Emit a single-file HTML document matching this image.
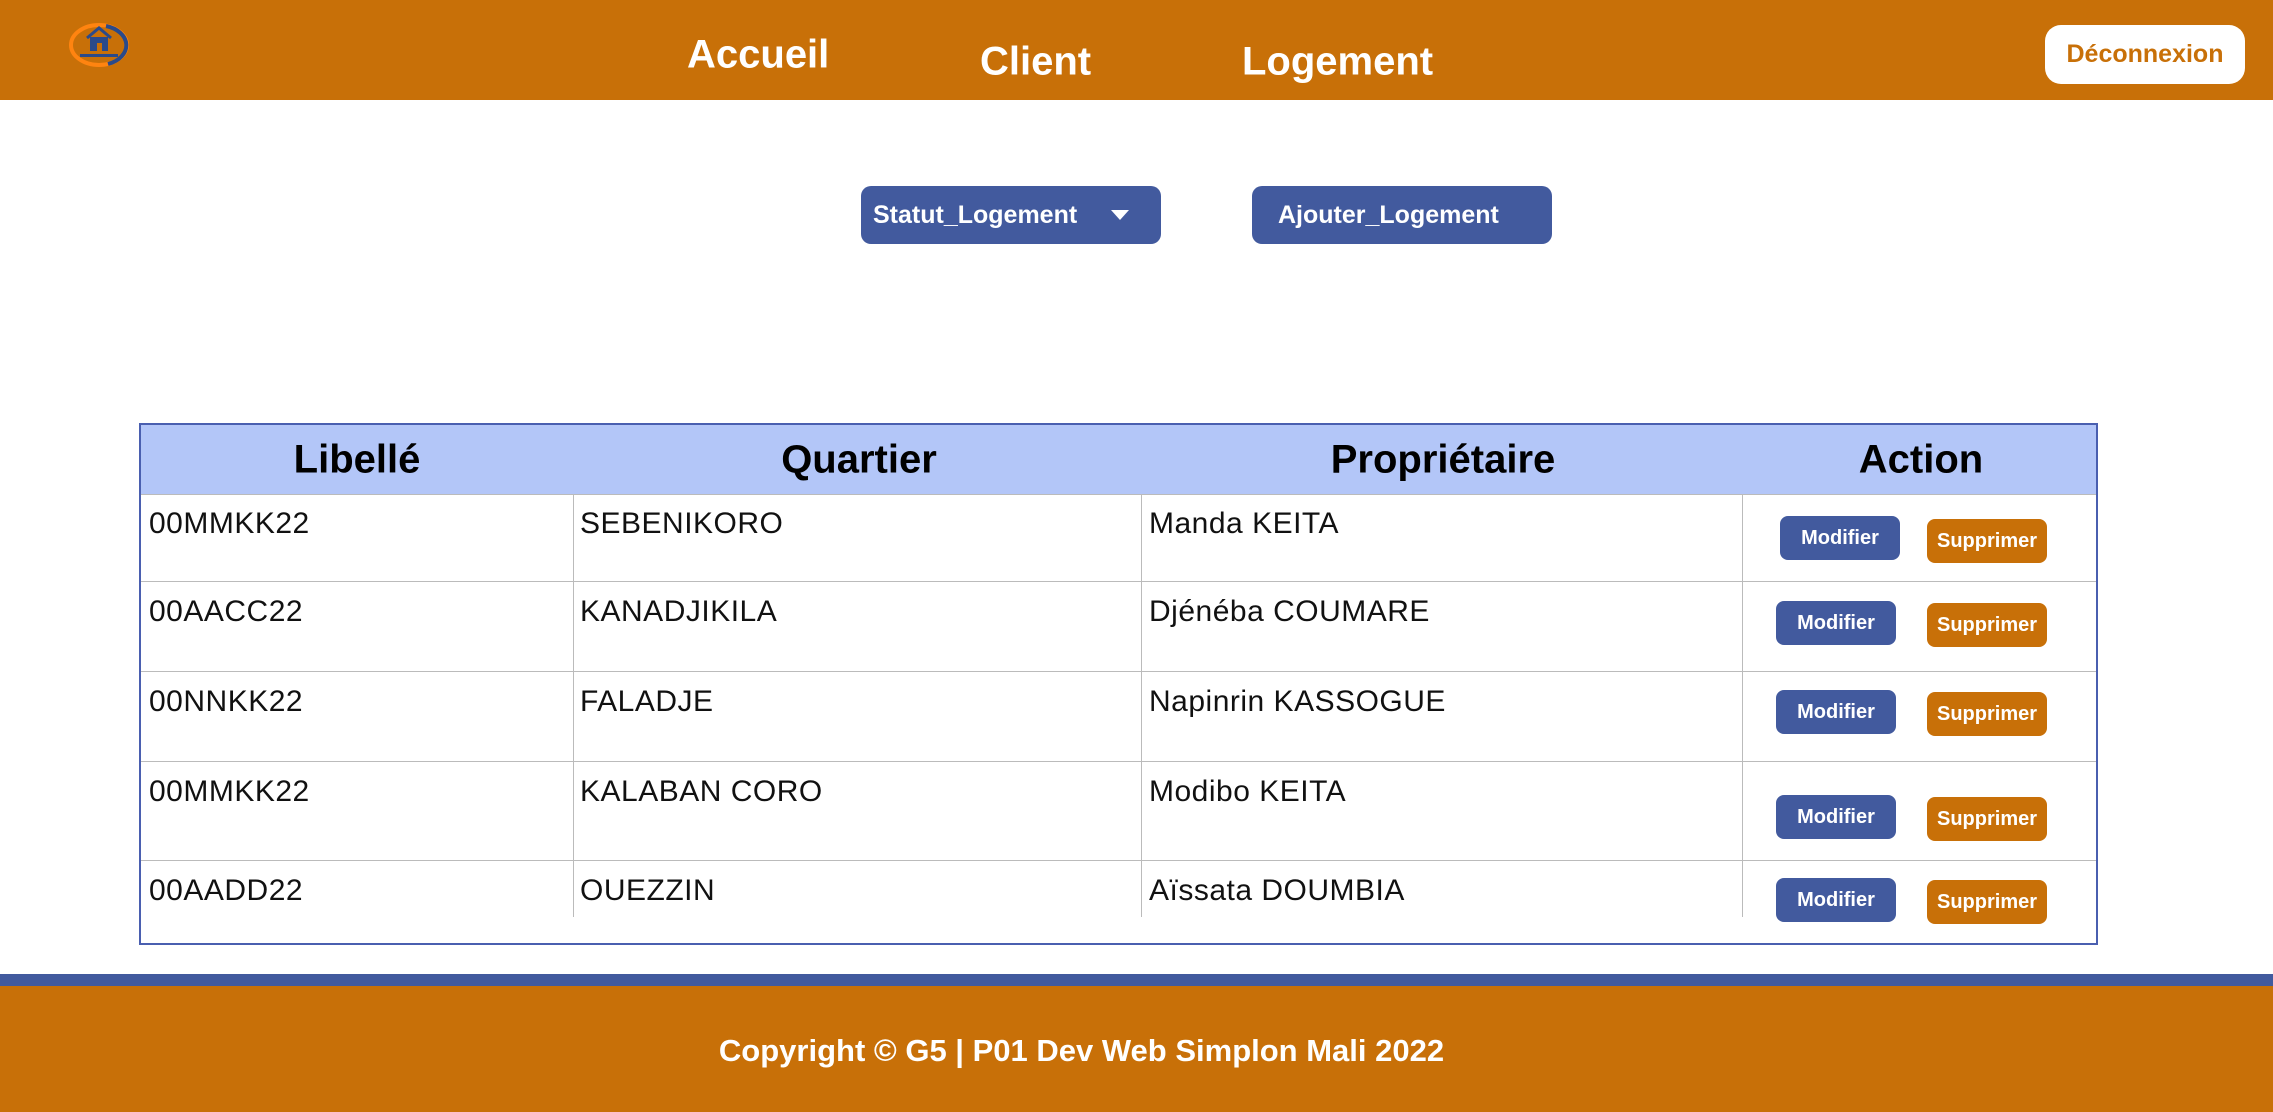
<!DOCTYPE html>
<html><head><meta charset="utf-8"><style>
*{margin:0;padding:0;box-sizing:border-box}
body{width:2273px;height:1112px;position:relative;background:#fff;font-family:"Liberation Sans",sans-serif;overflow:hidden}
.hdr{position:absolute;left:0;top:0;width:2273px;height:100px;background:#C87008}
.nav{position:absolute;color:#fff;font-weight:bold;font-size:40px;transform:translateY(-50%)}
.dec{position:absolute;left:2045px;top:25px;width:200px;height:59px;background:#fff;border-radius:16px;color:#C87008;font-weight:bold;font-size:25px;display:flex;align-items:center;justify-content:center}
.btn{position:absolute;top:186px;width:300px;height:58px;background:#425A9E;border-radius:10px;color:#fff;font-weight:bold;font-size:25px;display:flex;align-items:center}
.tbl{position:absolute;left:139px;top:423px;width:1959px;height:522px;border:2px solid #4a5fb0}
.th{position:absolute;top:0;left:0;width:100%;height:70px;background:#B3C6F8;border-bottom:1px solid #bbb}
.h{position:absolute;top:35px;transform:translate(-50%,-50%);font-weight:bold;font-size:40px;color:#000}
.vl{position:absolute;width:1px;background:#bbb}
.hl{position:absolute;left:0;width:100%;height:1px;background:#bbb}
.c{position:absolute;font-size:30px;color:#111;letter-spacing:0.5px}
.m,.s{position:absolute;width:120px;height:44px;border-radius:8px;color:#fff;font-weight:bold;font-size:20px;display:flex;align-items:center;justify-content:center}
.m{background:#425A9E}.s{background:#C87008}
</style></head><body>
<div class="hdr">
<svg style="position:absolute;left:68px;top:22px" width="62" height="46" viewBox="0 0 62 46">
<ellipse cx="31" cy="23" rx="28" ry="20" fill="none" stroke="#FF8410" stroke-width="4"/>
<path d="M38 4 A28 20 0 0 1 40 42" fill="none" stroke="#2a4a8a" stroke-width="4"/>
<path d="M19 16 L31 6 L43 16" fill="none" stroke="#2a4a8a" stroke-width="3"/>
<rect x="22" y="15" width="18" height="14" fill="#2a4a8a"/><rect x="29" y="21" width="5" height="8" fill="#C87008"/>
<rect x="12" y="32" width="38" height="3" fill="#2a4a8a"/>
</svg>
<div class="nav" style="left:687px;top:55px">Accueil</div>
<div class="nav" style="left:980px;top:62px">Client</div>
<div class="nav" style="left:1242px;top:62px">Logement</div>
<div class="dec">Déconnexion</div>
</div>
<div class="btn" style="left:861px;padding-left:12px">Statut_Logement
<svg style="position:absolute;left:250px;top:24px" width="18" height="10"><path d="M0 0H18L9 10Z" fill="#fff"/></svg></div>
<div class="btn" style="left:1252px;padding-left:26px">Ajouter_Logement</div>
<div class="tbl">
<div class="th"></div>
<div class="h" style="left:216px">Libellé</div>
<div class="h" style="left:718px">Quartier</div>
<div class="h" style="left:1302px">Propriétaire</div>
<div class="h" style="left:1780px">Action</div>
<div class="vl" style="left:432px;top:70px;height:422px"></div>
<div class="vl" style="left:1000px;top:70px;height:422px"></div>
<div class="vl" style="left:1601px;top:70px;height:422px"></div>
<div class="hl" style="top:156px"></div>
<div class="hl" style="top:246px"></div>
<div class="hl" style="top:336px"></div>
<div class="hl" style="top:435px"></div>

<div class="c" style="left:8px;top:82px">00MMKK22</div><div class="c" style="left:439px;top:82px">SEBENIKORO</div><div class="c" style="left:1008px;top:82px">Manda KEITA</div>
<div class="m" style="left:1639px;top:91px">Modifier</div><div class="s" style="left:1786px;top:94px">Supprimer</div>

<div class="c" style="left:8px;top:170px">00AACC22</div><div class="c" style="left:439px;top:170px">KANADJIKILA</div><div class="c" style="left:1008px;top:170px">Djénéba COUMARE</div>
<div class="m" style="left:1635px;top:176px">Modifier</div><div class="s" style="left:1786px;top:178px">Supprimer</div>

<div class="c" style="left:8px;top:260px">00NNKK22</div><div class="c" style="left:439px;top:260px">FALADJE</div><div class="c" style="left:1008px;top:260px">Napinrin KASSOGUE</div>
<div class="m" style="left:1635px;top:265px">Modifier</div><div class="s" style="left:1786px;top:267px">Supprimer</div>

<div class="c" style="left:8px;top:350px">00MMKK22</div><div class="c" style="left:439px;top:350px">KALABAN CORO</div><div class="c" style="left:1008px;top:350px">Modibo KEITA</div>
<div class="m" style="left:1635px;top:370px">Modifier</div><div class="s" style="left:1786px;top:372px">Supprimer</div>

<div class="c" style="left:8px;top:449px">00AADD22</div><div class="c" style="left:439px;top:449px">OUEZZIN</div><div class="c" style="left:1008px;top:449px">Aïssata DOUMBIA</div>
<div class="m" style="left:1635px;top:453px">Modifier</div><div class="s" style="left:1786px;top:455px">Supprimer</div>
</div>
<div style="position:absolute;left:0;top:974px;width:2273px;height:12px;background:#425A9E"></div>
<div style="position:absolute;left:0;top:986px;width:2273px;height:126px;background:#C87008;color:#fff;font-weight:bold;font-size:31px;display:flex;align-items:center;justify-content:center;padding-right:110px;padding-top:4px">Copyright © G5 | P01 Dev Web Simplon Mali 2022</div>
</body></html>
